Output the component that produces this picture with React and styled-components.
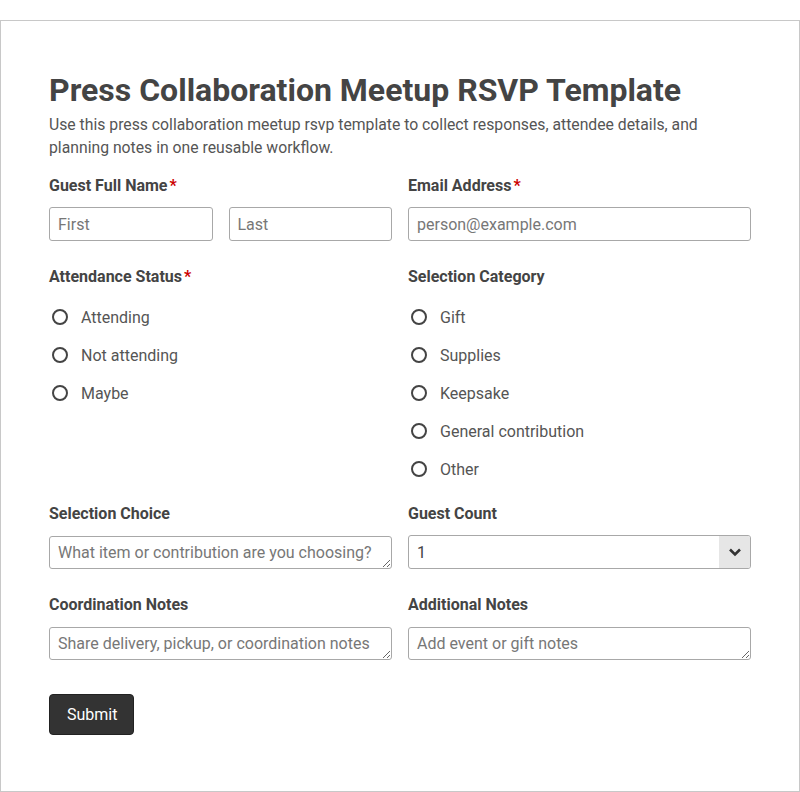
import React from "react";
import styled, { createGlobalStyle } from "styled-components";

const Global = createGlobalStyle`
  html, body { margin: 0; padding: 0; background: #fff; }
  body { font-family: Roboto, "Noto Sans", "Liberation Sans", sans-serif; color: #444; }
  * { box-sizing: border-box; }
`;

const Card = styled.div`
  margin-top: 20px;
  border: 1px solid #c8c8c8;
  padding: 50px 48px 56px;
  width: 100%;
`;

const Title = styled.h1`
  margin: 0;
  font-size: 32px;
  line-height: 38px;
  font-weight: 700;
  color: #444;
`;

const Description = styled.p`
  margin: 4px 0 17px;
  font-size: 15.75px;
  line-height: 23px;
  color: #555;
`;

const Grid = styled.div`
  display: grid;
  grid-template-columns: 1fr 1fr;
  column-gap: 16px;
  row-gap: 26px;
`;

const Field = styled.div`
  display: flex;
  flex-direction: column;
  min-width: 0;
`;

const Label = styled.div`
  font-size: 16px;
  line-height: 20px;
  font-weight: 700;
  color: #444;
  margin-bottom: 11px;
`;

const Req = styled.span`
  color: #c00;
  margin-left: 2px;
`;

const Pair = styled.div`
  display: grid;
  grid-template-columns: 1fr 1fr;
  gap: 16px;
`;

const controlBase = `
  width: 100%;
  height: 34px;
  border: 1px solid #a8a8a8;
  border-radius: 3px;
  font-family: Roboto, "Noto Sans", "Liberation Sans", sans-serif;
  font-size: 16px;
  color: #444;
  background: #fff;
  padding: 0 8px;
  outline: none;
  &::placeholder { color: #777; }
`;

const Input = styled.input`
  ${controlBase}
`;

const TextArea = styled.textarea`
  ${controlBase}
  display: block;
  height: 33px;
  padding: 6px 8px;
  line-height: 20px;
  resize: vertical;
  overflow: hidden;
  margin-top: 1px;
`;

const SelectWrap = styled.div`
  position: relative;
`;

const Select = styled.select`
  ${controlBase}
  appearance: none;
  -webkit-appearance: none;
  padding-right: 40px;
`;

const Arrow = styled.span`
  position: absolute;
  top: 1px;
  right: 1px;
  bottom: 1px;
  width: 31px;
  background: #e6e6e6;
  border-radius: 0 2px 2px 0;
  display: flex;
  align-items: center;
  justify-content: center;
  pointer-events: none;
`;

const RadioList = styled.div`
  display: flex;
  flex-direction: column;
  margin-bottom: -10px;
`;

const RadioOption = styled.label`
  display: flex;
  align-items: center;
  height: 38px;
  gap: 13px;
  font-size: 16px;
  color: #555;
`;

const RadioCircle = styled.input.attrs({ type: "radio" })`
  appearance: none;
  -webkit-appearance: none;
  width: 16px;
  height: 16px;
  margin: 0 0 0 3px;
  border: 2px solid #444;
  border-radius: 50%;
  background: #fff;
  flex: none;
`;

const SubmitButton = styled.button`
  margin-top: 34px;
  height: 41px;
  padding: 0 16px 0 17px;
  background: #333;
  border: 1px solid #222;
  border-radius: 4px;
  color: #fff;
  font-family: Roboto, "Noto Sans", "Liberation Sans", sans-serif;
  font-size: 16px;
`;

function Radios({ name, options }) {
  return (
    <RadioList>
      {options.map((o) => (
        <RadioOption key={o}>
          <RadioCircle name={name} />
          {o}
        </RadioOption>
      ))}
    </RadioList>
  );
}

export default function App() {
  return (
    <>
      <Global />
      <Card>
        <Title>Press Collaboration Meetup RSVP Template</Title>
        <Description>
          Use this press collaboration meetup rsvp template to collect responses, attendee details, and
          planning notes in one reusable workflow.
        </Description>
        <Grid>
          <Field>
            <Label>
              Guest Full Name<Req>*</Req>
            </Label>
            <Pair>
              <Input placeholder="First" />
              <Input placeholder="Last" />
            </Pair>
          </Field>
          <Field>
            <Label>
              Email Address<Req>*</Req>
            </Label>
            <Input placeholder="person@example.com" />
          </Field>

          <Field>
            <Label>
              Attendance Status<Req>*</Req>
            </Label>
            <Radios name="attendance" options={["Attending", "Not attending", "Maybe"]} />
          </Field>
          <Field>
            <Label>Selection Category</Label>
            <Radios
              name="category"
              options={["Gift", "Supplies", "Keepsake", "General contribution", "Other"]}
            />
          </Field>

          <Field>
            <Label>Selection Choice</Label>
            <TextArea rows={1} placeholder="What item or contribution are you choosing?" />
          </Field>
          <Field>
            <Label>Guest Count</Label>
            <SelectWrap>
              <Select defaultValue="1">
                <option>1</option>
                <option>2</option>
                <option>3</option>
                <option>4</option>
              </Select>
              <Arrow>
                <svg width="14" height="10" viewBox="0 0 14 10">
                  <path d="M2 2.5 L7 7.5 L12 2.5" fill="none" stroke="#333" strokeWidth="2.6" />
                </svg>
              </Arrow>
            </SelectWrap>
          </Field>

          <Field>
            <Label>Coordination Notes</Label>
            <TextArea rows={1} placeholder="Share delivery, pickup, or coordination notes" />
          </Field>
          <Field>
            <Label>Additional Notes</Label>
            <TextArea rows={1} placeholder="Add event or gift notes" />
          </Field>
        </Grid>
        <SubmitButton type="button">Submit</SubmitButton>
      </Card>
    </>
  );
}
